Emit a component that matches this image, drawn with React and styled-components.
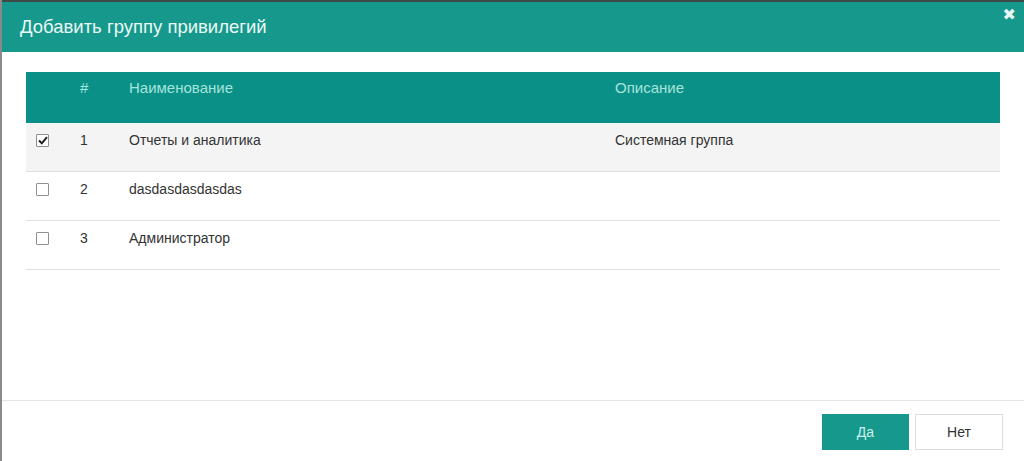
import React from 'react';
import styled, { createGlobalStyle } from 'styled-components';

const GlobalStyle = createGlobalStyle`
  html, body {
    margin: 0;
    padding: 0;
    background: #fff;
  }
  body {
    font-family: "Liberation Sans", Arial, sans-serif;
  }
  * {
    box-sizing: border-box;
  }
`;

const Modal = styled.div`
  width: 1024px;
  height: 461px;
  display: flex;
  flex-direction: column;
  background: #fff;
  border-left: 2px solid #8a8a8a;
  overflow: hidden;
`;

const Header = styled.div`
  height: 52px;
  flex-shrink: 0;
  display: flex;
  align-items: center;
  justify-content: space-between;
  padding: 0 0 0 18px;
  background: #17988c;
  border-top: 2px solid #3d4a48;
`;

const Title = styled.h4`
  margin: 0;
  font-size: 18.5px;
  font-weight: normal;
  color: #eaf8f6;
`;

const Close = styled.button`
  align-self: flex-start;
  margin: 5px 8px 0 0;
  padding: 0;
  border: 0;
  background: none;
  color: #e8f6f4;
  font-size: 16px;
  font-weight: bold;
  line-height: 1;
  cursor: pointer;
  font-family: "DejaVu Sans", sans-serif;
`;

const Body = styled.div`
  flex: 1;
  padding: 20px 24px 0 24px;
`;

const Row = styled.div`
  display: grid;
  grid-template-columns: 44px 49px 486px 1fr;
  height: ${p => (p.head ? '51px' : '49px')};
  background: ${p => (p.head ? '#0a9087' : p.active ? '#f4f4f4' : '#fff')};
  border-bottom: ${p => (p.head ? 'none' : '1px solid #e0e0e0')};
  color: ${p => (p.head ? '#a6e4dd' : '#333')};
  font-size: ${p => (p.head ? '15px' : '14px')};
`;

const Cell = styled.div`
  padding: ${p => (p.head ? '6px 10px 0' : '8px 10px 0')};
  line-height: 19px;
  white-space: nowrap;
`;

const Check = styled.span`
  display: inline-flex;
  align-items: center;
  justify-content: center;
  width: 13px;
  height: 13px;
  margin-top: 3px;
  border: 1px solid #8f8f8f;
  background: #fff;
  border-radius: 1px;
`;

const Footer = styled.div`
  height: 61px;
  flex-shrink: 0;
  display: flex;
  justify-content: flex-end;
  align-items: flex-start;
  gap: 6px;
  padding: 13px 21px 0 0;
  border-top: 1px solid #e5e5e5;
`;

const Button = styled.button`
  width: ${p => (p.primary ? '87px' : '88px')};
  height: 36px;
  font-family: "Liberation Sans", Arial, sans-serif;
  font-size: 14px;
  border: 1px solid ${p => (p.primary ? '#17988c' : '#ddd')};
  background: ${p => (p.primary ? '#17988c' : '#fff')};
  color: ${p => (p.primary ? '#c9f0eb' : '#333')};
  cursor: pointer;
`;

const groups = [
  { id: 1, name: 'Отчеты и аналитика', desc: 'Системная группа', checked: true },
  { id: 2, name: 'dasdasdasdasdas', desc: '', checked: false },
  { id: 3, name: 'Администратор', desc: '', checked: false },
];

const CheckBox = ({ checked }) => (
  <Check>
    {checked && (
      <svg width="10" height="9" viewBox="0 0 10 9">
        <path d="M1 4.5 L3.8 7.3 L9 1.2" fill="none" stroke="#222" strokeWidth="2" />
      </svg>
    )}
  </Check>
);

export default function App() {
  return (
    <>
      <GlobalStyle />
      <Modal>
        <Header>
          <Title>Добавить группу привилегий</Title>
          <Close>✖</Close>
        </Header>
        <Body>
          <Row head>
            <Cell head />
            <Cell head>#</Cell>
            <Cell head>Наименование</Cell>
            <Cell head>Описание</Cell>
          </Row>
          {groups.map(g => (
            <Row key={g.id} active={g.checked}>
              <Cell>
                <CheckBox checked={g.checked} />
              </Cell>
              <Cell>{g.id}</Cell>
              <Cell>{g.name}</Cell>
              <Cell>{g.desc}</Cell>
            </Row>
          ))}
        </Body>
        <Footer>
          <Button primary>Да</Button>
          <Button>Нет</Button>
        </Footer>
      </Modal>
    </>
  );
}
